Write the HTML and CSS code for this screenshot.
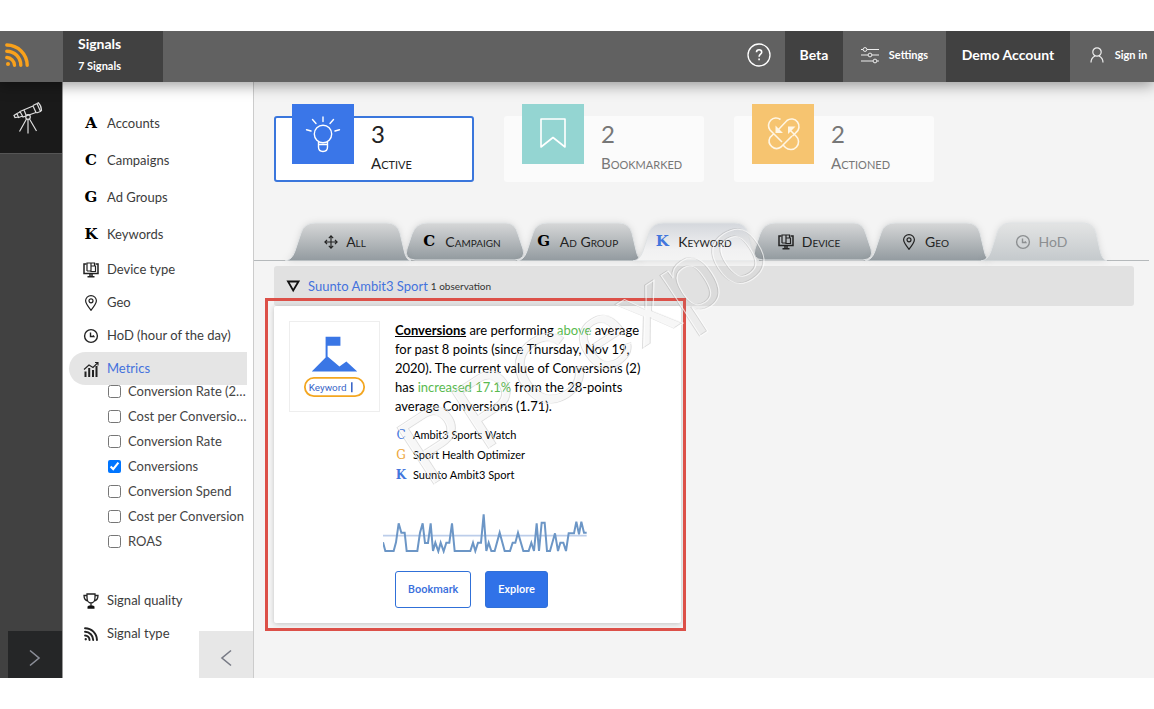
FILE: index.html
```html
<!DOCTYPE html>
<html lang="en">
<head>
<meta charset="utf-8">
<title>Signals</title>
<link rel="stylesheet" href="styles.css">
</head>
<body>
<svg class="defs" aria-hidden="true">
  <defs>
    <linearGradient id="tab-fill" x1="0" y1="0" x2="0" y2="1"><stop offset="0" stop-color="#d6d7d8"/><stop offset="1" stop-color="#929a9f"/></linearGradient>
    <linearGradient id="tab-on" x1="0" y1="0" x2="0" y2="1"><stop offset="0" stop-color="#d4d7dc"/><stop offset="0.7" stop-color="#f1f1f2"/><stop offset="1" stop-color="#f4f4f4"/></linearGradient>
    <linearGradient id="tab-off" x1="0" y1="0" x2="0" y2="1"><stop offset="0" stop-color="#e3e4e4"/><stop offset="1" stop-color="#c4c9cc"/></linearGradient>
    <symbol id="tab-flare" viewBox="0 0 128 39" preserveAspectRatio="none"><path d="M1 39Q8 38 11 29L17 11Q20 1 31 1H103Q113 1 116 11L120 28Q122 38 127 39Z"/></symbol>
    <symbol id="tab-round" viewBox="0 0 128 39" preserveAspectRatio="none"><path d="M15 38Q4 37 7 27L12 12Q16 1 27 1H106Q115 1 118 12L123 27Q126 37 115 38Z"/></symbol>
    <symbol id="device" viewBox="0 0 16 16"><path d="M3.500 2H1v9.500h14V2h-2.500M4.500 14.700h7M7 11.500v3M9 11.500v3" fill="none" stroke="currentColor" stroke-width="1.500"/><path d="M4 9V1h7.500v3M4 9h4M8 4h4.500v5.500H8zM8 1v3" fill="none" stroke="currentColor" stroke-width="1.200"/></symbol>
    <symbol id="pin" viewBox="0 0 16 16"><path d="M8 15.300C5 11.500 2.600 8.500 2.600 5.800a5.400 5.200 0 0 1 10.800 0C13.400 8.500 11 11.500 8 15.300z" fill="none" stroke="currentColor" stroke-width="1.200"/><circle cx="8" cy="5.800" r="2" fill="none" stroke="currentColor" stroke-width="1.200"/></symbol>
    <symbol id="clock" viewBox="0 0 16 16"><circle cx="8" cy="8" r="6.400" fill="none" stroke="currentColor" stroke-width="1.400"/><path d="M7.500 4.500v4h3.300L10 7.300" fill="none" stroke="currentColor" stroke-width="1.400"/></symbol>
    <symbol id="waves" viewBox="0 0 24 24"><circle cx="3" cy="21" r="2" fill="currentColor"/><path d="M1.800 14.500a8 8 0 0 1 7.700 7.700M1.800 8.200a14 14 0 0 1 14 14M1.800 2a20.500 20.500 0 0 1 20.400 20.200" fill="none" stroke="currentColor" stroke-width="3.400" stroke-linecap="round"/></symbol>
  </defs>
</svg>
<div class="app">
  <header class="topbar">
    <a class="logo" href="#" aria-label="Home"><svg class="i24"><use href="#waves"/></svg></a>
    <div class="title"><h1>Signals</h1><p>7 Signals</p></div>
    <div class="spacer"></div>
    <button class="help" aria-label="Help"><svg class="i24" viewBox="0 0 24 24"><circle cx="12" cy="12" r="11" fill="none" stroke="#fff" stroke-width="1.300"/><path d="M9.500 9.200c0-3.200 5.200-3.200 5.200 0 0 2.100-2.600 2-2.600 4.600M12.100 15.500v1.800" fill="none" stroke="#fff" stroke-width="1.600"/></svg></button>
    <div class="badge beta">Beta</div>
    <button class="settings"><svg class="i18" viewBox="0 0 18 18" fill="none" stroke="#eee"><path d="M0 3.500h2M6 3.500h12M0 9h7M11 9h7M0 15h12M16 15h2"/><circle cx="4" cy="3.500" r="1.900"/><circle cx="9" cy="9" r="1.900"/><circle cx="14" cy="15" r="1.900"/></svg>Settings</button>
    <div class="badge demo">Demo Account</div>
    <a class="signin" href="#"><svg class="i16" viewBox="0 0 16 16" fill="none" stroke="#eee" stroke-width="1.200"><circle cx="8" cy="5" r="4.200"/><path d="M2 15.500c0-4 2-5.500 4-6.500M14 15.500c0-4-2-5.500-4-6.500"/></svg>Sign in</a>
  </header>
  <div class="body">
    <aside class="rail">
      <a class="scope" href="#" aria-label="Signals"><svg class="i32" viewBox="0 0 32 32" fill="none" stroke="#ddd" stroke-width="1.200"><path d="M8 10.500l13-5.500 3 6.500-13 4.500zM21 4.500l4-2 3.500 8-4 1.500M25 2.500l1.500-.7q3 3 3 7.700l-1.500 1M8 11l-3 1.500 1.500 4 3.500-1.200M5 12.500l-3 2 1 2 3.500-.5M12 9l2 5"/><circle cx="16" cy="16" r="2.300"/><path d="M16 18.500v14M14.500 18l-7 12.500M17.500 18l7 12"/></svg></a>
      <button class="expand" aria-label="Expand menu"><svg class="i18" viewBox="0 0 18 18"><path d="M4 1.500l9 7.500-9 7.500" fill="none" stroke="#8b8e98" stroke-width="1.600"/></svg></button>
    </aside>
    <nav class="filters">
      <ul class="menu">
        <li><a class="tall" href="#"><b class="slab">A</b>Accounts</a></li>
        <li><a class="tall" href="#"><b class="slab">C</b>Campaigns</a></li>
        <li><a class="tall" href="#"><b class="slab">G</b>Ad Groups</a></li>
        <li><a class="tall" href="#"><b class="slab">K</b>Keywords</a></li>
        <li><a href="#"><svg class="i16"><use href="#device"/></svg>Device type</a></li>
        <li><a href="#"><svg class="i16"><use href="#pin"/></svg>Geo</a></li>
        <li><a href="#"><svg class="i16"><use href="#clock"/></svg>HoD (hour of the day)</a></li>
        <li><a class="current" href="#"><svg class="i16" viewBox="0 0 16 16" fill="none" stroke="#222"><path d="M2.500 16V10.500M6.200 16V7M10 16V9M13.500 16V5" stroke-width="2"/><path d="M1 8.500l5-4.500 4 2.500 5-5M12 1.500h3v3" stroke-width="1.100"/></svg>Metrics</a></li>
      </ul>
      <div class="metrics">
        <label><input type="checkbox"><span>Conversion Rate (2…</span></label>
        <label><input type="checkbox"><span>Cost per Conversio…</span></label>
        <label><input type="checkbox"><span>Conversion Rate</span></label>
        <label><input type="checkbox" checked><span>Conversions</span></label>
        <label><input type="checkbox"><span>Conversion Spend</span></label>
        <label><input type="checkbox"><span>Cost per Conversion</span></label>
        <label><input type="checkbox"><span>ROAS</span></label>
      </div>
      <ul class="menu">
        <li><a href="#"><svg class="i16" viewBox="0 0 16 16"><path d="M4 1h8v3.500C12 8 10 10 8 10S4 8 4 4.500zM4 2.500H1C1 6 2.500 7.500 5 8M12 2.500h3C15 6 13.500 7.500 11 8M8 10v3" fill="none" stroke="#222" stroke-width="1.300"/><path d="M6 12.500h4l1.500 1v2.300h-7v-2.300z" fill="#111"/></svg>Signal quality</a></li>
        <li><a href="#"><svg class="i14"><use href="#waves"/></svg>Signal type</a></li>
      </ul>
      <button class="collapse" aria-label="Collapse filters"><svg class="i18" viewBox="0 0 18 18"><path d="M14 1.500L5 9l9 7.500" fill="none" stroke="#777a85" stroke-width="1.600"/></svg></button>
    </nav>
    <main class="main">
      <div class="stats">
        <a class="stat active" href="#"><span class="tile blue"><svg class="i40" viewBox="0 0 40 40" fill="none" stroke="#fff" stroke-width="1.400" stroke-linecap="round"><circle cx="20" cy="20" r="8.700"/><path d="M15.500 28v5q0 4.500 4.500 4.500t4.500-4.500v-5M16 30.500h8.500M20 7.500V3M13 9.500L9.500 5.500M27 9.500l3.500-4M8 17l-4.500-1.200M32 17l4.500-1.200"/></svg></span><span class="fig"><strong>3</strong><span>Active</span></span></a>
        <a class="stat" href="#"><span class="tile teal"><svg class="i40" viewBox="0 0 40 40" fill="none" stroke="#fff" stroke-width="1.600"><path d="M8 5h24v28L20 23.500 8 33z" stroke-linejoin="round"/></svg></span><span class="fig"><strong>2</strong><span>Bookmarked</span></span></a>
        <a class="stat" href="#"><span class="tile amber"><svg class="i40" viewBox="0 0 40 40" fill="none" stroke="#fff6e4" stroke-width="1.600"><path d="M15.500 15.500L24 6.500a7.500 7.500 0 0 1 9 12l-3.500 3.500M17.500 5.500A7.500 7.500 0 0 0 7 16l12 12M26 15l7 7a7.500 7.500 0 0 1-10.500 11.500l-2-2M11 19.500l-4 4A7.500 7.500 0 0 0 18 33l11-11"/><path d="M12.500 11.500V19H20zM25 20v-7.500h7.500z" fill="#fff6e4" stroke="none"/></svg></span><span class="fig"><strong>2</strong><span>Actioned</span></span></a>
      </div>
      <div class="tabs">
        <button class="tab front"><svg class="shape"><use href="#tab-flare"/></svg><svg class="i14" viewBox="0 0 16 16" fill="none" stroke="currentColor" stroke-width="1.300"><path d="M8 1v14M1 8h14M5.500 3.500L8 1l2.500 2.500M5.500 12.500L8 15l2.500-2.500M3.500 5.500L1 8l2.500 2.500M12.500 5.500L15 8l-2.500 2.500"/></svg>All</button>
        <button class="tab"><svg class="shape"><use href="#tab-round"/></svg><b class="slab">C</b>Campaign</button>
        <button class="tab front"><svg class="shape"><use href="#tab-flare"/></svg><b class="slab">G</b>Ad Group</button>
        <button class="tab on"><svg class="shape"><use href="#tab-flare"/></svg><b class="slab">K</b>Keyword</button>
        <button class="tab"><svg class="shape"><use href="#tab-round"/></svg><svg class="i16"><use href="#device"/></svg>Device</button>
        <button class="tab front"><svg class="shape"><use href="#tab-flare"/></svg><svg class="i16"><use href="#pin"/></svg>Geo</button>
        <button class="tab off" disabled><svg class="shape"><use href="#tab-flare"/></svg><svg class="i16"><use href="#clock"/></svg>HoD</button>
      </div>
      <section class="group">
        <header class="group-head"><svg class="i14" viewBox="0 0 14 14"><path d="M2 2.500h10.500L7.200 11.500z" fill="none" stroke="#111" stroke-width="1.800"/></svg><a href="#">Suunto Ambit3 Sport</a><small>1 observation</small></header>
        <article class="card">
          <div class="thumb"><svg viewBox="0 0 90 90"><path d="M36 15h15v9H38v11l12 10 7-5 11 10H22l14-14z" fill="#3a76e5"/><rect x="15" y="56.500" width="60" height="18.500" rx="9.200" fill="none" stroke="#f3a620" stroke-width="1.800"/><text x="19" y="70">Keyword</text><path d="M62.500 61v10" stroke="#3a66c8" stroke-width="1.600"/></svg></div>
          <div class="copy">
            <p class="text"><a href="#">Conversions</a> are performing <em>above</em> average<br>for past 8 points (since Thursday, Nov 19,<br>2020). The current value of Conversions (2)<br>has <em>increased 17.1%</em> from the 28-points<br>average Conversions (1.71).</p>
            <ul class="path">
              <li><i class="c">C</i>Ambit3 Sports Watch</li>
              <li><i class="g">G</i>Sport Health Optimizer</li>
              <li><i class="k">K</i>Suunto Ambit3 Sport</li>
            </ul>
            <svg class="spark" viewBox="39 96 612 126" fill="none"><path d="M39 167H650" stroke="#bccdea" stroke-width="5"/><polyline stroke="#6c96c6" stroke-width="6" points="39,187 46,213 71,213 78,187 86,130 94,158 104,158 110,213 142,213 150,158 158,130 165,189 174,189 182,130 189,213 196,188 205,214 212,188 221,214 229,188 238,188 246,130 254,213 301,213 309,188 316,213 324,188 333,188 341,103 349,213 356,188 364,213 374,213 389,158 404,213 420,213 428,188 436,188 444,158 460,213 476,213 484,188 492,213 500,130 507,213 515,128 524,128 531,213 540,213 555,160 564,213 571,188 580,188 588,213 596,160 612,160 619,125 627,163 634,125 642,158 650,158"/></svg>
            <div class="actions"><button class="btn ghost">Bookmark</button><button class="btn solid">Explore</button></div>
          </div>
          <div class="highlight"></div>
          <svg class="watermark" viewBox="0 0 400 290" aria-hidden="true"><g transform="rotate(-33 50 274)"><text class="wm-dark" x="45" y="276">PPCexpo</text><text class="wm-light" x="46" y="277">PPCexpo</text></g></svg>
        </article>
      </section>
    </main>
  </div>
</div>
</body>
</html>
```
FILE: styles.css
```css
* { box-sizing: border-box; }
body {
  margin: 0;
  padding: 31px 0;
  min-height: 100vh;
  display: flex;
  background: #fff;
  color: #333;
  font: 13px/19px Lato, sans-serif;
}
h1, p, ul { margin: 0; padding: 0; }
ul { list-style: none; }
a { color: inherit; text-decoration: none; }
button { border: 0; padding: 0; background: none; color: inherit; font: inherit; cursor: pointer; }
svg { display: block; flex: none; }
.defs { position: absolute; width: 0; height: 0; }
.i14 { width: 14px; height: 14px; }
.i16 { width: 16px; height: 16px; }
.i18 { width: 18px; height: 18px; }
.i24 { width: 24px; height: 24px; }
.i32 { width: 32px; height: 34px; }
.i40 { width: 40px; height: 40px; }
.slab { width: 16px; font: bold 15px/19px "DejaVu Serif", serif; color: #000; text-align: center; }

.app { flex: 1; display: flex; flex-direction: column; }
.topbar {
  position: relative;
  z-index: 2;
  display: flex;
  height: 51px;
  background: #616161;
  color: #fff;
  font-weight: bold;
  font-size: 11px;
  box-shadow: 0 3px 14px rgba(0, 0, 0, 0.4);
  clip-path: inset(0 0 -20px 0);
}
.logo { width: 63px; padding: 12px 5px; color: #f9a11b; }
.title { width: 100px; padding: 3px 15px; background: #414141; }
.title h1 { font-size: 14px; line-height: 20px; }
.title p { line-height: 24px; }
.spacer { flex: 1; }
.help { padding: 0 14px 4px; }
.badge { display: flex; align-items: center; justify-content: center; padding-bottom: 4px; background: #414141; font-size: 14px; }
.beta { width: 58px; }
.demo { width: 124px; }
.settings, .signin { display: flex; align-items: center; justify-content: center; gap: 10px; padding-bottom: 4px; }
.settings { width: 103px; }
.signin { width: 84px; padding-left: 12px; }

.body { flex: 1; display: flex; }
.rail { width: 63px; display: flex; flex-direction: column; justify-content: space-between; background: #414141; border-right: 1px solid #999; }
.scope { height: 72px; padding: 18px 12px; background: #1a1a1a; border-bottom: 1px solid #555; }
.expand { display: grid; place-items: center; height: 47px; margin-left: 8px; padding-top: 6px; background: #252627; }

.filters { position: relative; width: 191px; padding-top: 23px; border-right: 1px solid #ccc; background: #fff; white-space: nowrap; }
.menu a { display: flex; align-items: center; gap: 8px; height: 33px; margin: 0 6px; padding-left: 14px; color: #3c3c3c; }
.menu a.tall { height: 37px; }
.menu svg { width: 16px; color: #222; }
.menu a.current { background: #e5e5e5; border-radius: 17px 0 0 17px; color: #4472dd; }
.metrics { overflow: hidden; margin: 0 0 30px 45px; }
.metrics label { display: flex; align-items: center; gap: 7px; height: 25px; color: #444; }
.metrics label:first-child { margin-top: -6px; }
.metrics input { flex: none; width: 13px; height: 13px; margin: 0; }
.collapse { position: absolute; right: 0; bottom: 0; display: grid; place-items: center; width: 54px; height: 47px; padding-top: 6px; background: #e7e7e7; }

.main { flex: 1; min-width: 0; background: #f4f4f4; }
.stats { display: flex; gap: 30px; padding: 34px 20px 40px; }
.stat { display: flex; gap: 17px; width: 200px; height: 66px; padding-left: 18px; border-radius: 3px; background: #fbfbfb; color: #777; }
.stat.active { padding-left: 16px; border: 2px solid #3a76dc; background: #fff; color: #222; }
.tile { display: grid; place-items: center; width: 62px; height: 60px; margin-top: -12px; }
.active .tile { margin-top: -14px; }
.blue { background: #3a76e8; }
.teal { background: #94d5d2; }
.amber { background: #f6c470; }
.fig { display: flex; flex-direction: column; padding-top: 2px; font-variant: small-caps; font-size: 15px; line-height: 29px; }
.active .fig { padding-top: 0; }
.fig strong { font-size: 24px; font-weight: normal; line-height: 31px; }

.tabs { display: flex; height: 39px; margin-right: 5px; padding-left: 33px; border-bottom: 1px solid #b5b9bb; }
.tab { position: relative; z-index: 0; display: flex; align-items: center; justify-content: center; gap: 8px; width: 116px; height: 39px; color: #222; font-size: 14px; font-variant: small-caps; }
.tab .shape { position: absolute; z-index: -1; top: 0; left: -3px; width: 128px; height: 39px; fill: url(#tab-fill); stroke: #dfe2e4; stroke-width: 1; filter: drop-shadow(0 0 3px rgba(0, 0, 0, 0.1)); }
.tab.front { z-index: 1; }
.tab.on { z-index: 2; }
.tab.on .shape { fill: url(#tab-on); }
.tab.on .slab { color: #4276dd; }
.tab.off { color: #8c8f91; font-variant: normal; z-index: 1; }
.tab.off .shape { fill: url(#tab-off); }

.group { margin: 5px 20px 0; }
.group-head { display: flex; align-items: center; gap: 8px; height: 40px; padding-left: 12px; border-radius: 3px; background: #e1e1e1; }
.group-head a { color: #4472dd; }
.group-head small { margin-left: -5px; font-size: 10px; }
.card { position: relative; display: flex; gap: 15px; width: 407px; padding: 15px; background: #fff; border-radius: 2px; box-shadow: 0 1px 5px rgba(0, 0, 0, 0.2); color: #111; }
.thumb { width: 91px; height: 91px; flex: none; border: 1px solid #eee; }
.thumb text { font: 10px Roboto, sans-serif; fill: #3a66c8; }
.copy { flex: 1; white-space: nowrap; }
.text { color: #000; }
.text a { font-weight: bold; text-decoration: underline; }
.text em { font-style: normal; color: #5aba50; }
.path { margin-top: 9px; font-size: 11px; line-height: 20px; color: #000; }
.path li { display: flex; gap: 6px; }
.path i { width: 12px; font-family: "DejaVu Serif", serif; font-size: 12px; font-style: normal; text-align: center; }
.path .c { color: #4276dd; }
.path .g { color: #eda63b; }
.path .k { color: #4276dd; font-weight: bold; }
.spark { width: 204px; height: 42px; margin: 27px 0 17px -12px; }
.actions { display: flex; gap: 14px; }
.btn { height: 37px; padding: 0 12px; border: 1px solid #3070d8; border-radius: 3px; font: 500 11px Roboto, sans-serif; }
.ghost { background: #fff; color: #3a70dc; }
.solid { background: #3072e8; color: #fff; }
.highlight { position: absolute; top: -8px; left: -9px; width: 421px; height: 333px; border: 3px solid #dc5048; pointer-events: none; }
.watermark { position: absolute; z-index: 3; left: 106px; top: -96px; width: 400px; height: 290px; overflow: visible; pointer-events: none; font: 98px "Liberation Sans", sans-serif; }
.wm-dark { fill: rgba(150, 150, 150, 0.08); stroke: rgba(110, 110, 110, 0.2); }
.wm-light { fill: none; stroke: rgba(255, 255, 255, 0.7); }
```
